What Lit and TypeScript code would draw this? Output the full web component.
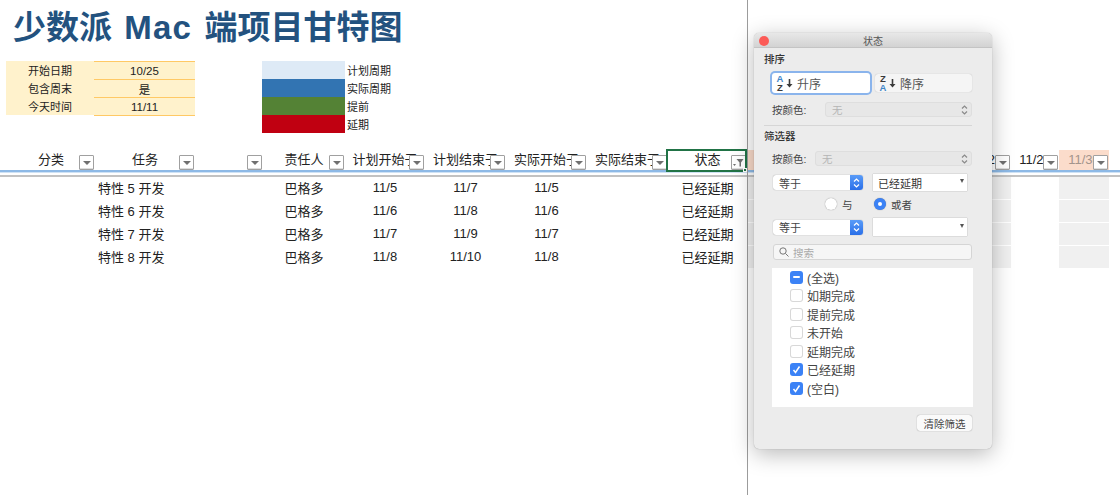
import { LitElement, html, css, svg } from "lit";
import { customElement } from "lit/decorators.js";

const COLS = ["分类", "任务", "", "责任人", "计划开始于", "计划结束于", "实际开始于", "实际结束于", "状态"];
const ROWS = [
  ["", "特性 5 开发", "", "巴格多", "11/5", "11/7", "11/5", "", "已经延期"],
  ["", "特性 6 开发", "", "巴格多", "11/6", "11/8", "11/6", "", "已经延期"],
  ["", "特性 7 开发", "", "巴格多", "11/7", "11/9", "11/7", "", "已经延期"],
  ["", "特性 8 开发", "", "巴格多", "11/8", "11/10", "11/8", "", "已经延期"],
];
const INFO = [["开始日期", "10/25"], ["包含周末", "是"], ["今天时间", "11/11"]];
const LEGEND = [["计划周期", "plan"], ["实际周期", "actual"], ["提前", "early"], ["延期", "late"]];
const CHECKS: [string, string][] = [
  ["(全选)", "mixed"], ["如期完成", ""], ["提前完成", ""], ["未开始", ""], ["延期完成", ""], ["已经延期", "on"], ["(空白)", "on"],
];

const updown = svg`<svg width="7" height="12" viewBox="0 0 7 12" fill="none" stroke="currentColor" stroke-width="1.2"><path d="M1 4.5 3.5 2 6 4.5M1 7.5 3.5 10 6 7.5"/></svg>`;
const arrow = svg`<svg class="aw" width="7" height="10" viewBox="0 0 7 10"><path d="M2.700 1h1.600v5h2.200L3.500 9.500.5 6h2.200z" fill="#3a3a3a"/></svg>`;

@customElement("app-root")
export class AppRoot extends LitElement {
  static styles = css`
    :host { display: block; position: relative; width: 1120px; height: 495px; overflow: hidden; background: #fff;
      font-family: "Liberation Sans", "Noto Sans CJK SC", sans-serif; color: #222; }
    .title { height: 61px; box-sizing: border-box; padding: 6px 0 0 13px; margin: 0; font-size: 33px; word-spacing: 3px; line-height: 44px; font-weight: 700; color: #23527f; white-space: nowrap; }
    .mac { letter-spacing: 1.3px; }
    .top { display: flex; height: 89px; align-items: flex-start; padding-left: 6px; font-size: 11.5px; }
    .info { display: grid; grid-template-columns: 88px 101px; grid-auto-rows: 18px; width: 256px; }
    .info div { display: flex; align-items: center; justify-content: center; background: #fff2cc; }
    .info .k { font-size: 11px; }
    .info .v { border-top: 1px solid #ffc965; box-sizing: border-box; }
    .info .v.last { border-bottom: 1px solid #ffc965; height: 19px; }
    .legend { display: grid; grid-template-columns: 83px auto; grid-auto-rows: 18px; column-gap: 2px; }
    .legend span { display: flex; align-items: center; font-size: 11px; }
    .sw-plan { background: #deeaf6; } .sw-actual { background: #3274b2; } .sw-early { background: #548235; } .sw-late { background: #c00011; }
    .grid { display: grid; grid-template-columns: 95px 100px 68px 82px 80px 81px 81px 81px 79px 18px 197px 49px 48px 50px; width: 1109px; }
    .head { height: 20px; }
    .hc { position: relative; height: 20px; display: flex; align-items: center; justify-content: center; font-size: 13px; white-space: nowrap; overflow: hidden; line-height: 20px; }
    .hc:first-child { padding-left: 7px; }
    .hc.peach { background: #fbdccb; color: #a3948c; }
    .fb { position: absolute; right: 1px; bottom: 0; width: 15px; height: 15px; box-sizing: border-box; background: #fff; border: 1px solid #a0a0a0; border-radius: 1px; box-shadow: inset 0 -1px 0 #ddd; display: flex; align-items: center; justify-content: center; }
    .fb i { width: 0; height: 0; border-left: 4px solid transparent; border-right: 4px solid transparent; border-top: 4px solid #707070; margin-top: 1px; }
    .rule { height: 7px; box-sizing: border-box; width: 100%; border-bottom: 2px solid #c2c2c2; }
    .rule::before { content: ""; display: block; height: 2px; background: #8db9e6; border-bottom: 1px solid #cfe2f5; }
    .row { height: 23px; }
    .c { height: 23px; display: flex; align-items: center; justify-content: center; font-size: 13px; white-space: nowrap; padding-bottom: 2px; box-sizing: border-box; }
    .c.task { justify-content: flex-start; padding-left: 3px; }
    .c.g { background: #f0f0f0; border-bottom: 1px solid #fff; padding-bottom: 0; }
    .sel { position: absolute; left: 666px; top: 149px; width: 81px; height: 23px; box-sizing: border-box; border: 2px solid #217346; pointer-events: none; }
    .sel::after { content: ""; position: absolute; right: -2px; bottom: -2px; width: 4px; height: 4px; background: #217346; border: 1px solid #fff; box-sizing: border-box; }
    .split { position: absolute; left: 747px; top: 0; bottom: 0; width: 1px; background: #9c9c9c; }
    .dlg { position: absolute; left: 754px; top: 33px; width: 238px; height: 416px; box-sizing: border-box; background: #ececec; border-radius: 5px; box-shadow: 0 0 1px rgba(0,0,0,.35), 0 5px 22px rgba(0,0,0,.28); font-size: 11px; color: #444; display: flex; flex-direction: column; }
    .tb { height: 15px; flex: none; background: linear-gradient(#e8e8e8, #d3d3d3); border-radius: 5px 5px 0 0; border-bottom: 1px solid #c4c4c4; box-sizing: border-box; display: flex; align-items: center; justify-content: center; font-size: 10px; color: #555; position: relative; }
    .close { position: absolute; left: 5px; top: 3px; width: 10px; height: 10px; border-radius: 50%; background: #fc5b57; }
    .body { padding: 5px 20px 0 10px; display: flex; flex-direction: column; flex: 1; }
    .h { height: 12px; line-height: 12px; font-size: 10.5px; font-weight: 500; color: #333; }
    .h2 { margin-top: 4px; }
    .ind { padding-left: 8px; display: flex; align-items: center; }
    .sort { margin-top: 8px; height: 20px; gap: 5px; }
    .sb { height: 18px; background: #f5f5f5; border-radius: 3px; box-shadow: 0 0 1px rgba(0,0,0,.25); display: flex; align-items: center; box-sizing: border-box; padding-left: 4px; gap: 2px; font-size: 12px; color: #555; }
    .sb.a { width: 98px; height: 20px; background: #fff; box-shadow: 0 0 0 2px #8ab4ec; }
    .sb.b { width: 97px; }
    .az { display: flex; flex-direction: column; font-size: 9.5px; line-height: 9px; font-weight: 700; width: 8px; align-items: center; color: #3a3a3a; }
    .az .bl { color: #3f86c8; }
    .aw { margin-right: 2px; }
    .colr { height: 15px; font-size: 10.5px; color: #444; justify-content: space-between; margin-top: 9px; }
    .dis { height: 15px; background: #e7e7e7; border: 1px solid #dedede; border-radius: 3px; box-sizing: border-box; display: flex; align-items: center; justify-content: space-between; padding: 0 3px 0 6px; color: #b5b5b5; font-size: 10.5px; }
    .dis svg { color: #8a8a8a; }
    .d1 { width: 147px; } .d2 { width: 157px; }
    .sep { height: 1px; background: #d6d6d6; margin-top: 8px; }
    .cond { padding-left: 9px; height: 17px; margin-top: 8px; }
    .cond.second { height: 18px; margin-top: 7px; }
    .pick { height: 15px; width: 90px; background: #fff; border-radius: 3px; box-shadow: 0 0 1px rgba(0,0,0,.45); box-sizing: border-box; padding-left: 6px; display: flex; align-items: center; justify-content: space-between; font-size: 11px; color: #444; overflow: hidden; }
    .pick b { width: 13px; height: 15px; background: linear-gradient(#5a9cf8, #2a6fe8); color: #fff; display: flex; align-items: center; justify-content: center; }
    .combo { margin-left: 10px; width: 94px; height: 100%; background: #fff; box-shadow: 0 0 1px rgba(0,0,0,.4); display: flex; align-items: center; justify-content: space-between; box-sizing: border-box; padding: 0 3px 0 5px; font-size: 11px; color: #333; }
    .combo i { width: 0; height: 0; border-left: 2.5px solid transparent; border-right: 2.5px solid transparent; border-top: 4px solid #555; margin-bottom: 3px; }
    .radios { margin-top: 6px; height: 14px; font-size: 10.5px; padding-left: 61px; }
    .radio { width: 12px; height: 12px; border-radius: 50%; background: #fff; box-shadow: 0 0 1px rgba(0,0,0,.5); box-sizing: border-box; margin-right: 5px; flex: none; }
    .radio.on { background: #3b82f6; display: flex; align-items: center; justify-content: center; }
    .radio.on::after { content: ""; width: 4px; height: 4px; border-radius: 50%; background: #fff; }
    .rl { width: 32px; }
    .search { margin: 8px 0 0 9px; height: 16px; width: 199px; background: #f6f6f6; border: 1px solid #d5d5d5; border-radius: 3px; box-sizing: border-box; display: flex; align-items: center; padding-left: 5px; gap: 4px; color: #aaa; font-size: 10.5px; }
    .list { margin: 8px 0 0 8px; width: 201px; height: 139px; background: #fff; box-sizing: border-box; padding: 0 0 0 18px; }
    .item { height: 18.5px; display: flex; align-items: center; gap: 4px; font-size: 12px; color: #444; }
    .cb { width: 13px; height: 13px; border-radius: 3px; background: #fff; box-shadow: inset 0 0 0 1px #d8d8d8; display: flex; align-items: center; justify-content: center; flex: none; }
    .cb.on, .cb.mixed { background: #3b82f6; box-shadow: none; }
    .cb.mixed::after { content: ""; width: 7px; height: 2px; background: #fff; border-radius: 1px; }
    .foot { margin-top: 8px; display: flex; justify-content: flex-end; }
    .clear { width: 55px; height: 16px; background: #fafafa; border-radius: 3px; box-shadow: 0 0 1px rgba(0,0,0,.5); display: flex; align-items: center; justify-content: center; font-size: 10.5px; color: #444; }
  `;

  private pick(label: string) {
    return html`<div class="pick"><span>${label}</span><b>${updown}</b></div>`;
  }

  render() {
    const dateHeads: [string, string][] = [["", "peach"], ["", ""], ["11/26", ""], ["11/27", ""], ["11/30", "peach"]];
    return html`
      <h1 class="title">少数派 <span class="mac">Mac</span> 端项目甘特图</h1>
      <div class="top">
        <div class="info">
          ${INFO.map(([k, v], i) => html`<div class="k">${k}</div><div class="v ${i === 2 ? "last" : ""}">${v}</div>`)}
        </div>
        <div class="legend">
          ${LEGEND.map(([l, k]) => html`<div class="sw-${k}"></div><span>${l}</span>`)}
        </div>
      </div>
      <div class="grid head">
        ${COLS.map((c, i) => html`<div class="hc">${c}<div class="fb">${i === 8
          ? html`<svg width="11" height="9" viewBox="0 0 11 9"><path d="M0 6h3L1.500 8z" fill="#707070"/><path d="M3.500 1h7L8 4.500V8.500H6.500V4.500z" fill="#707070"/></svg>`
          : html`<i></i>`}</div></div>`)}
        ${dateHeads.map(([t, k]) => html`<div class="hc ${k}">${t}${t ? html`<div class="fb"><i></i></div>` : ""}</div>`)}
      </div>
      <div class="rule"></div>
      ${ROWS.map((r) => html`<div class="grid row">
        ${r.map((c, i) => html`<div class="c ${i === 1 ? "task" : ""}">${c}</div>`)}
        <div class="c g"></div><div class="c"></div><div class="c g"></div><div class="c"></div><div class="c g"></div>
      </div>`)}
      <div class="sel"></div>
      <div class="split"></div>
      <div class="dlg">
        <div class="tb"><span class="close"></span>状态</div>
        <div class="body">
          <div class="h">排序</div>
          <div class="ind sort">
            <div class="sb a"><span class="az"><span class="bl">A</span><span>Z</span></span>${arrow}升序</div>
            <div class="sb b"><span class="az"><span>Z</span><span class="bl">A</span></span>${arrow}降序</div>
          </div>
          <div class="ind colr"><span>按颜色:</span><div class="dis d1"><span>无</span>${updown}</div></div>
          <div class="sep"></div>
          <div class="h h2">筛选器</div>
          <div class="ind colr"><span>按颜色:</span><div class="dis d2"><span>无</span>${updown}</div></div>
          <div class="ind cond">${this.pick("等于")}<div class="combo"><span>已经延期</span><i></i></div></div>
          <div class="ind radios"><span class="radio"></span><span class="rl">与</span><span class="radio on"></span><span>或者</span></div>
          <div class="ind cond second">${this.pick("等于")}<div class="combo"><span></span><i></i></div></div>
          <div class="search">
            <svg width="10" height="10" viewBox="0 0 10 10" fill="none" stroke="#777" stroke-width="1"><circle cx="4" cy="4" r="3.200"/><path d="M6.500 6.500 9.500 9.500"/></svg>
            <span>搜索</span>
          </div>
          <div class="list">
            ${CHECKS.map(([t, s]) => html`<div class="item"><span class="cb ${s}">${s === "on"
              ? html`<svg width="9" height="9" viewBox="0 0 9 9" fill="none" stroke="#fff" stroke-width="1.500"><path d="M1.500 5 3.500 7.500 7.500 1.500"/></svg>`
              : ""}</span><span>${t}</span></div>`)}
          </div>
          <div class="foot"><div class="clear">清除筛选</div></div>
        </div>
      </div>
    `;
  }
}
